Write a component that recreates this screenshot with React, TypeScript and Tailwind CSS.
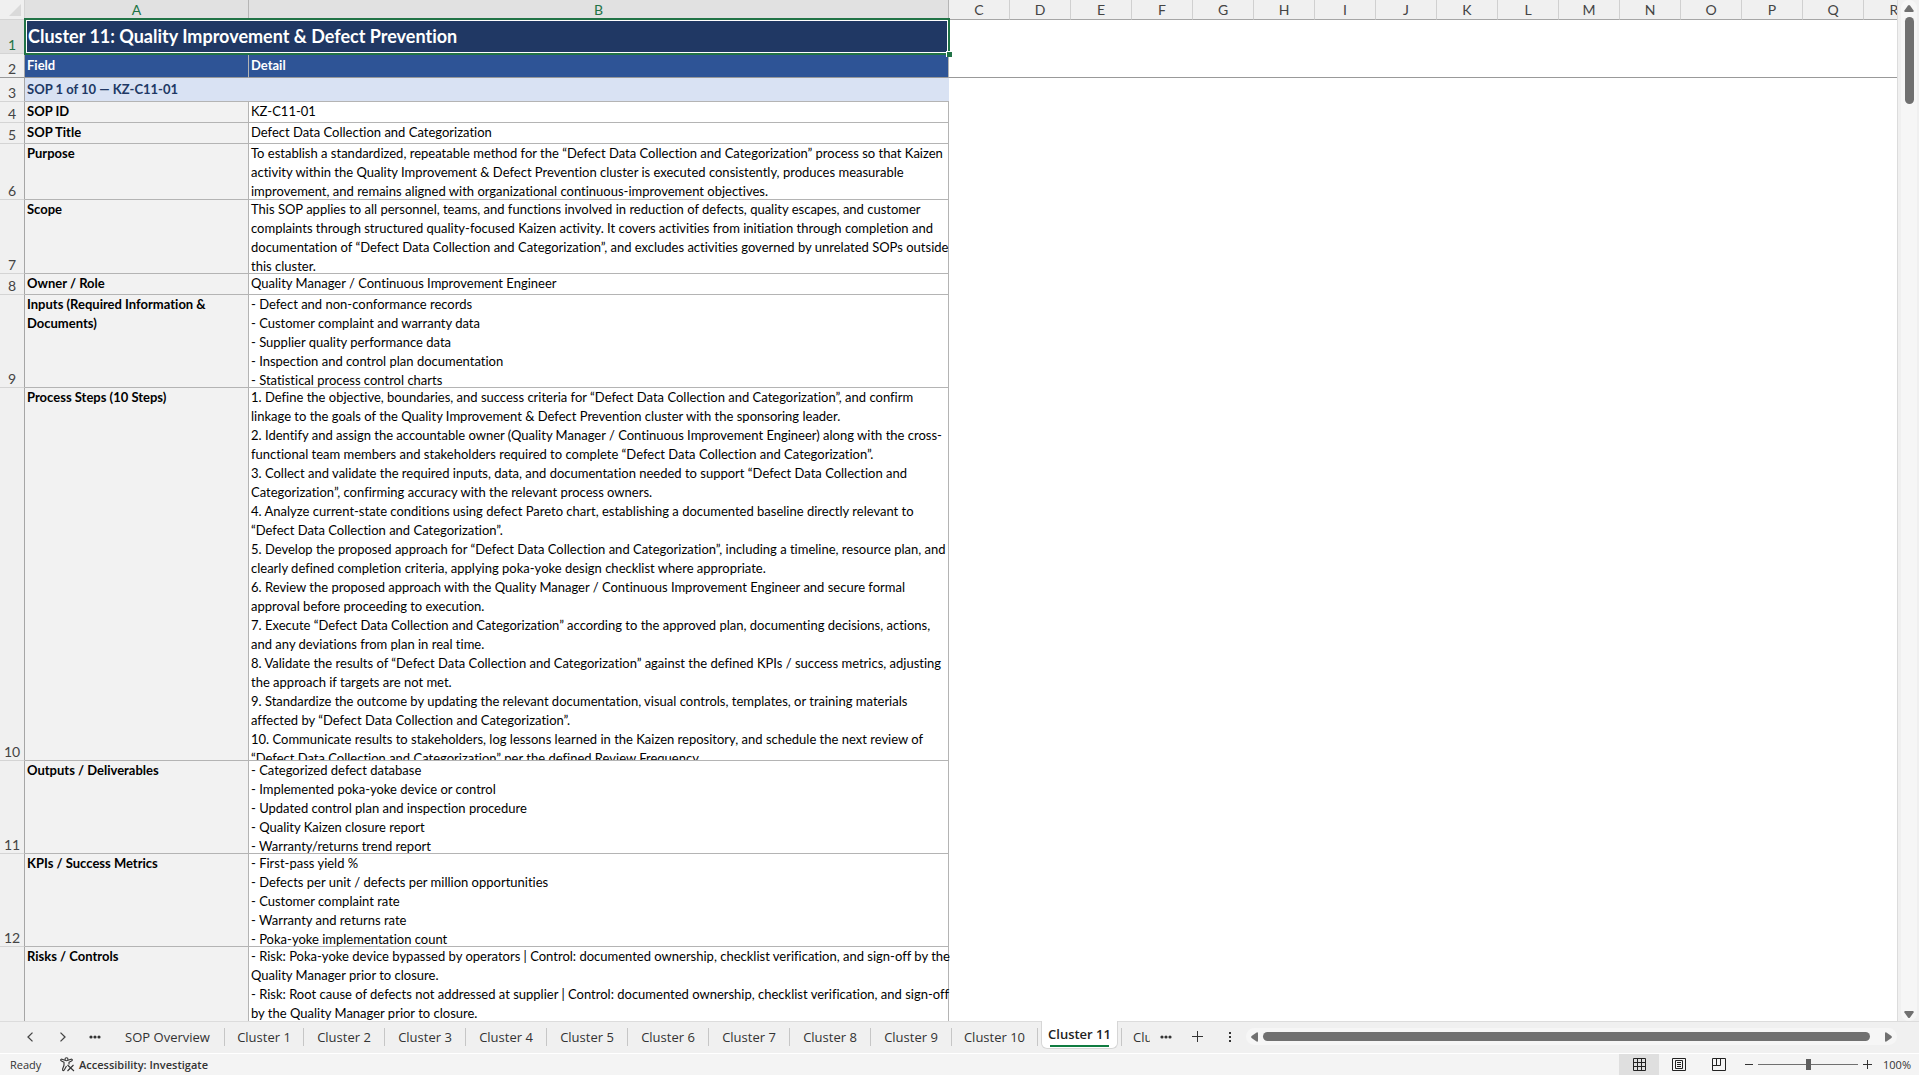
import React from 'react';
import clsx from 'clsx';

const COLUMNS = 'CDEFGHIJKLMNOPQR'.split('');

type SheetRow = {
  num: number;
  height: string;
  label: string;
  lines: string[];
};

const ROWS: SheetRow[] = [
  { num: 4, height: 'h-5', label: 'SOP ID', lines: ['KZ-C11-01'] },
  { num: 5, height: 'h-5', label: 'SOP Title', lines: ['Defect Data Collection and Categorization'] },
  {
    num: 6,
    height: 'h-[55px]',
    label: 'Purpose',
    lines: [
      'To establish a standardized, repeatable method for the “Defect Data Collection and Categorization” process so that Kaizen',
      'activity within the Quality Improvement & Defect Prevention cluster is executed consistently, produces measurable',
      'improvement, and remains aligned with organizational continuous-improvement objectives.',
    ],
  },
  {
    num: 7,
    height: 'h-[73px]',
    label: 'Scope',
    lines: [
      'This SOP applies to all personnel, teams, and functions involved in reduction of defects, quality escapes, and customer',
      'complaints through structured quality-focused Kaizen activity. It covers activities from initiation through completion and',
      'documentation of “Defect Data Collection and Categorization”, and excludes activities governed by unrelated SOPs outside',
      'this cluster.',
    ],
  },
  { num: 8, height: 'h-5', label: 'Owner / Role', lines: ['Quality Manager / Continuous Improvement Engineer'] },
  {
    num: 9,
    height: 'h-[92px]',
    label: 'Inputs (Required Information &\nDocuments)',
    lines: [
      '- Defect and non-conformance records',
      '- Customer complaint and warranty data',
      '- Supplier quality performance data',
      '- Inspection and control plan documentation',
      '- Statistical process control charts',
    ],
  },
  {
    num: 10,
    height: 'h-[372px]',
    label: 'Process Steps (10 Steps)',
    lines: [
      '1. Define the objective, boundaries, and success criteria for “Defect Data Collection and Categorization”, and confirm',
      'linkage to the goals of the Quality Improvement & Defect Prevention cluster with the sponsoring leader.',
      '2. Identify and assign the accountable owner (Quality Manager / Continuous Improvement Engineer) along with the cross-',
      'functional team members and stakeholders required to complete “Defect Data Collection and Categorization”.',
      '3. Collect and validate the required inputs, data, and documentation needed to support “Defect Data Collection and',
      'Categorization”, confirming accuracy with the relevant process owners.',
      '4. Analyze current-state conditions using defect Pareto chart, establishing a documented baseline directly relevant to',
      '“Defect Data Collection and Categorization”.',
      '5. Develop the proposed approach for “Defect Data Collection and Categorization”, including a timeline, resource plan, and',
      'clearly defined completion criteria, applying poka-yoke design checklist where appropriate.',
      '6. Review the proposed approach with the Quality Manager / Continuous Improvement Engineer and secure formal',
      'approval before proceeding to execution.',
      '7. Execute “Defect Data Collection and Categorization” according to the approved plan, documenting decisions, actions,',
      'and any deviations from plan in real time.',
      '8. Validate the results of “Defect Data Collection and Categorization” against the defined KPIs / success metrics, adjusting',
      'the approach if targets are not met.',
      '9. Standardize the outcome by updating the relevant documentation, visual controls, templates, or training materials',
      'affected by “Defect Data Collection and Categorization”.',
      '10. Communicate results to stakeholders, log lessons learned in the Kaizen repository, and schedule the next review of',
      '“Defect Data Collection and Categorization” per the defined Review Frequency.',
    ],
  },
  {
    num: 11,
    height: 'h-[92px]',
    label: 'Outputs / Deliverables',
    lines: [
      '- Categorized defect database',
      '- Implemented poka-yoke device or control',
      '- Updated control plan and inspection procedure',
      '- Quality Kaizen closure report',
      '- Warranty/returns trend report',
    ],
  },
  {
    num: 12,
    height: 'h-[92px]',
    label: 'KPIs / Success Metrics',
    lines: [
      '- First-pass yield %',
      '- Defects per unit / defects per million opportunities',
      '- Customer complaint rate',
      '- Warranty and returns rate',
      '- Poka-yoke implementation count',
    ],
  },
  {
    num: 13,
    height: 'h-[188px]',
    label: 'Risks / Controls',
    lines: [
      '- Risk: Poka-yoke device bypassed by operators | Control: documented ownership, checklist verification, and sign-off by the',
      'Quality Manager prior to closure.',
      '- Risk: Root cause of defects not addressed at supplier | Control: documented ownership, checklist verification, and sign-off',
      'by the Quality Manager prior to closure.',
    ],
  },
];

const TABS = [
  { name: 'SOP Overview', width: 'w-[114px]' },
  { name: 'Cluster 1', width: 'w-[79px]' },
  { name: 'Cluster 2', width: 'w-[81px]' },
  { name: 'Cluster 3', width: 'w-[81px]' },
  { name: 'Cluster 4', width: 'w-[81px]' },
  { name: 'Cluster 5', width: 'w-[81px]' },
  { name: 'Cluster 6', width: 'w-[81px]' },
  { name: 'Cluster 7', width: 'w-[81px]' },
  { name: 'Cluster 8', width: 'w-[81px]' },
  { name: 'Cluster 9', width: 'w-[81px]' },
  { name: 'Cluster 10', width: 'w-[86px]' },
];

const RowHead: React.FC<{ num: number; active?: boolean; frozen?: boolean }> = ({ num, active, frozen }) => (
  <th
    scope="row"
    className={clsx(
      'border-r border-b border-r-[#a6a6a6] p-0 text-center align-bottom text-sm leading-[17px] font-normal',
      active ? 'bg-[#e1e1e1] text-[#217346]' : 'bg-[#f0f0f0] text-[#444]',
      frozen ? 'border-b-[#999]' : 'border-b-[#d4d4d4]',
    )}
  >
    {num}
  </th>
);

const Sheet: React.FC = () => (
  <table className="w-[1925px] table-fixed border-separate border-spacing-0 font-[Lato,'Noto_Sans',sans-serif] [font-variant-ligatures:none]">
    <colgroup>
      <col className="w-[25px]" />
      <col className="w-[224px]" />
      <col className="w-[700px]" />
      {COLUMNS.map((c) => (
        <col key={c} className="w-[61px]" />
      ))}
    </colgroup>
    <thead>
      <tr className="h-5 text-sm leading-[18px] text-[#444]">
        <td className="border-r border-b border-[#d4d4d4] bg-[#f0f0f0] p-0">
          <svg className="ml-[9px] block" width="12" height="12" viewBox="0 0 12 12">
            <path d="M12 0v12H0z" fill="#dadada" />
          </svg>
        </td>
        <th className="border-r border-b border-[#b5b5b5] bg-[#e1e1e1] p-0 pt-px font-normal text-[#217346]">A</th>
        <th className="border-r border-b border-[#b5b5b5] bg-[#e1e1e1] p-0 pt-px font-normal text-[#217346]">B</th>
        {COLUMNS.map((c) => (
          <th key={c} className="border-r border-b border-r-[#d0d0d0] border-b-[#a6a6a6] bg-[#f0f0f0] p-0 pt-px font-normal">
            {c}
          </th>
        ))}
      </tr>
    </thead>
    <tbody className="text-[13px] leading-[19px] text-black">
      <tr className="h-[34px]">
        <RowHead num={1} active />
        <td colSpan={2} className="relative bg-[#203864] p-0 pb-0.5 pl-[3px] text-lg leading-7 font-bold text-white">
          Cluster 11: Quality Improvement &amp; Defect Prevention
          {/* selection frame and fill handle */}
          <div className="absolute -top-0.5 -right-px -bottom-px -left-px border-2 border-[#217346]">
            <div className="h-full border border-white" />
            <div className="absolute -right-1 -bottom-1 size-[6px] border-t border-l border-white bg-[#217346]" />
          </div>
        </td>
        <td colSpan={16} />
      </tr>
      <tr className="h-6 font-bold text-white">
        <RowHead num={2} frozen />
        <td className="border-r border-b border-r-[#b4b4b4] border-b-[#999] bg-[#2e5496] p-0 pl-0.5">Field</td>
        <td className="border-r border-b border-r-[#b4b4b4] border-b-[#999] bg-[#2e5496] p-0 pl-0.5">Detail</td>
        <td colSpan={16} className="border-b border-[#999]" />
      </tr>
      <tr className="h-6">
        <RowHead num={3} />
        <td colSpan={2} className="border-b border-[#b4b4b4] bg-[#d9e2f3] p-0 pl-0.5 font-bold text-[#203864]">
          SOP 1 of 10 — KZ-C11-01
        </td>
        <td colSpan={16} />
      </tr>
      {ROWS.map((row) => (
        <tr key={row.num}>
          <RowHead num={row.num} />
          <td className="border-r border-b border-[#b4b4b4] bg-[#f2f2f2] p-0 pl-0.5 align-top font-bold">
            <div className={clsx('overflow-hidden whitespace-pre', row.height)}>{row.label}</div>
          </td>
          <td className="border-r border-b border-[#b4b4b4] p-0 pl-0.5 align-top">
            <div className={clsx('overflow-x-visible overflow-y-clip whitespace-pre', row.height)}>{row.lines.join('\n')}</div>
          </td>
          <td colSpan={16} />
        </tr>
      ))}
    </tbody>
  </table>
);

const VerticalScroll: React.FC = () => (
  <div className="flex w-[21px] shrink-0 flex-col items-center bg-[#f0f0f0] pl-px">
    <div className="flex w-4 flex-1 flex-col items-center rounded-full bg-[#f6f6f6] pt-[5px] pb-[3px]">
      <svg width="10" height="7" viewBox="0 0 10 7" fill="#707070">
        <path d="M4 .6Q5-.4 6 .6l3.6 5q.4 1.4-.8 1.4H1.200Q0 7 .4 5.600z" />
      </svg>
      <div className="mt-[5px] h-[87px] w-[9px] rounded-full bg-[#707070]" />
      <svg className="mt-auto" width="10" height="7" viewBox="0 0 10 7" fill="#707070">
        <path d="M4 6.400Q5 7.400 6 6.400l3.600-5Q10 0 8.800 0H1.200Q0 0 .4 1.400z" />
      </svg>
    </div>
  </div>
);

const Dots: React.FC = () => (
  <svg width="12" height="4" viewBox="0 0 12 4" fill="#333">
    <circle cx="2" cy="2" r="1.600" />
    <circle cx="6" cy="2" r="1.600" />
    <circle cx="10" cy="2" r="1.600" />
  </svg>
);

const TabBar: React.FC = () => (
  <div className="flex h-8 shrink-0 bg-[#f0f0f0] font-['Open_Sans','Noto_Sans',sans-serif] text-[13px] text-[#333]">
    <nav className="flex items-center border-t border-[#dcdcdc] pb-0.5">
      <button aria-label="Previous sheet" className="ml-[26px] w-2">
        <svg width="8" height="10" viewBox="0 0 8 10" fill="none" stroke="#444" strokeWidth="1.300">
          <path d="M6.500.6 2 5l4.500 4.400" />
        </svg>
      </button>
      <button aria-label="Next sheet" className="ml-[25px] w-2">
        <svg width="8" height="10" viewBox="0 0 8 10" fill="none" stroke="#444" strokeWidth="1.300">
          <path d="M1.500.6 6 5 1.500 9.400" />
        </svg>
      </button>
      <button aria-label="All sheets" className="ml-[22px] w-3">
        <Dots />
      </button>
      <div className="ml-[10px] flex">
        {TABS.map((tab) => (
          <button key={tab.name} className={clsx('h-[18px] shrink-0 border-r border-[#c6c6c6] leading-[18px]', tab.width)}>
            {tab.name}
          </button>
        ))}
      </div>
      <div className="w-[3px]" />
    </nav>
    <button className="h-7 w-[77px] shrink-0 rounded-b-md border-x border-b border-[#d6d6d6] bg-white px-2 font-semibold whitespace-nowrap text-[#222]">
      <span className="flex justify-center border-b-2 border-[#107c41] leading-[22px]">Cluster 11</span>
    </button>
    <div className="flex min-w-0 flex-1 items-center border-t border-[#dcdcdc] pb-0.5">
      <div className="ml-[3px] h-[18px] w-px shrink-0 bg-[#c6c6c6]" />
      <button className="ml-[11px] w-[17px] shrink-0 overflow-hidden text-left leading-[18px] whitespace-nowrap">Cluster 12</button>
      <button aria-label="More sheets" className="ml-[10px] w-3 shrink-0">
        <Dots />
      </button>
      <button aria-label="New sheet" className="ml-5 w-3 shrink-0">
        <svg width="12" height="12" viewBox="0 0 12 12" stroke="#333">
          <path d="M5.500 0v11M0 5.500h11" />
        </svg>
      </button>
      <button aria-label="Resize tabs" className="ml-[25px] w-[3px] shrink-0">
        <svg width="3" height="12" viewBox="0 0 3 12" fill="#333">
          <path d="M0 1h2v2H0zM0 5h2v2H0zM0 9h2v2H0z" />
        </svg>
      </button>
      <div className="mr-[22px] ml-[14px] flex h-[17px] min-w-0 flex-1 items-center rounded-full bg-[#f6f6f6] px-[5px]">
        <svg width="7" height="10" viewBox="0 0 7 10" fill="#707070">
          <path d="M.6 4Q-.4 5 .6 6l5 3.600Q7 10 7 8.800V1.200Q7 0 5.600.4z" />
        </svg>
        <div className="mr-[15px] ml-[5px] h-[9px] flex-1 rounded-full bg-[#707070]" />
        <svg width="7" height="10" viewBox="0 0 7 10" fill="#707070">
          <path d="M6.400 4Q7.400 5 6.400 6l-5 3.600Q0 10 0 8.800V1.200Q0 0 1.400.4z" />
        </svg>
      </div>
    </div>
  </div>
);

const StatusBar: React.FC = () => (
  <footer className="flex h-[22px] shrink-0 items-center border-t border-white bg-[#f4f4f4] font-['Open_Sans','Noto_Sans',sans-serif] text-[11px] leading-5 text-[#333]">
    <span className="ml-[10px] w-[50px]">Ready</span>
    <button className="flex items-center gap-1 font-semibold">
      <svg width="15" height="15" viewBox="0 0 15 15" fill="none" stroke="#333" strokeWidth="1.100" strokeLinejoin="round">
        <circle cx="6.500" cy="2.200" r="1.500" />
        <path d="M5 3.200 2 2.200Q.5 2 .7 3.200q.1.6.8.9L4 5.200v3L2.600 12q-.3 1.400.6 1.600.8.1 1.200-.8L6.500 9M8 3.200l3-1q1.500-.2 1.300 1-.1.6-.8.9L9 5.200v2.300" />
        <path d="m7.500 8 6.500 6M13.500 8 7.500 14" />
      </svg>
      Accessibility: Investigate
    </button>
    <div className="ml-auto flex h-full items-center">
      <button aria-label="Normal view" className="flex h-full w-10 items-center justify-center bg-[#dfdfdf]">
        <svg width="13" height="13" viewBox="0 0 13 13" fill="none" stroke="#222">
          <path d="M.5.5h12v12H.5zM4.500 0v13M8.500 0v13M0 4.500h13M0 8.500h13" />
        </svg>
      </button>
      <button aria-label="Page layout" className="flex h-full w-10 items-center justify-center">
        <svg width="14" height="13" viewBox="0 0 14 13" fill="none" stroke="#222">
          <path d="M.5.5h13v12H.5zM3.500 2.500h7v8h-7zM5 4.500h4M5 6.500h4M5 8.500h4" />
        </svg>
      </button>
      <button aria-label="Page break preview" className="flex h-full w-10 items-center justify-center">
        <svg width="14" height="13" viewBox="0 0 14 13" fill="none" stroke="#222">
          <path d="M.5.5h13v12H.5zM.5 7.500h8v-7M4.500.5v7" />
        </svg>
      </button>
      <button aria-label="Zoom out" className="ml-[6px] w-2">
        <svg width="8" height="9" viewBox="0 0 8 9" stroke="#333">
          <path d="M0 4.500h8" />
        </svg>
      </button>
      <input
        type="range"
        aria-label="Zoom"
        min={0}
        max={200}
        defaultValue={100}
        className="mx-[5px] h-[11px] w-[100px] appearance-none bg-[linear-gradient(#707070,#707070)] bg-[length:100%_1px] bg-center bg-no-repeat [&::-webkit-slider-thumb]:h-[11px] [&::-webkit-slider-thumb]:w-[5px] [&::-webkit-slider-thumb]:appearance-none [&::-webkit-slider-thumb]:bg-[#5f5f5f]"
      />
      <button aria-label="Zoom in" className="w-[9px]">
        <svg width="9" height="9" viewBox="0 0 9 9" stroke="#333">
          <path d="M0 4.500h9M4.500 0v9" />
        </svg>
      </button>
      <button className="mr-2 ml-[11px]">100%</button>
    </div>
  </footer>
);

const App: React.FC = () => (
  <div className="flex h-screen flex-col overflow-hidden bg-[#f0f0f0]">
    <div className="flex min-h-0 flex-1">
      <div className="min-w-0 flex-1 overflow-hidden border-r border-[#dcdcdc] bg-white">
        <Sheet />
      </div>
      <VerticalScroll />
    </div>
    <TabBar />
    <StatusBar />
  </div>
);

export default App;
